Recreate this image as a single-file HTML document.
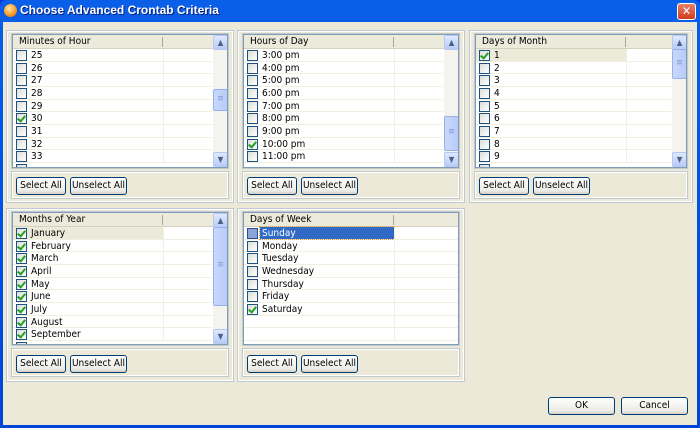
<!DOCTYPE html>
<html><head><meta charset="utf-8"><style>
*{box-sizing:border-box;margin:0;padding:0}
body{width:700px;height:428px;overflow:hidden;background:#0831d9;font-family:"DejaVu Sans Condensed","Liberation Sans",sans-serif;font-size:10px;position:relative;white-space:nowrap}
.win{position:absolute;left:0;top:0;width:700px;height:428px;background:linear-gradient(#0a5fe8,#0054e3 40%,#0046d6);border-radius:6px 6px 0 0}
.title{position:absolute;left:20px;top:3px;color:#fff;font-weight:bold;font-size:12px;font-family:"Liberation Sans",sans-serif;text-shadow:1px 1px #0a1e7a}
.ico{position:absolute;left:4px;top:4px;width:13px;height:13px;border-radius:50%;background:radial-gradient(circle at 40% 35%,#ffe7a0,#f08a10 70%,#b04a00)}
.close{position:absolute;left:677px;top:3px;width:19px;height:17px;border:1px solid #fff;border-radius:3px;background:linear-gradient(#e8806a,#d33a1c);color:#fff;font-weight:bold;font-size:12px;text-align:center;line-height:15px}
.client{position:absolute;left:3px;top:22px;width:694px;height:403px;background:#ece9d8}
.grp{position:absolute;border:1px solid #c0c8d0;box-shadow:inset 0 0 0 1px #fff}
.list{position:absolute;border:1px solid #7f9db9;background:#fff;overflow:hidden}
.hdr{position:absolute;left:0;top:0;right:0;height:14px;background:#ebeadb;border-bottom:1px solid #d6d2c2;padding-left:6px;line-height:14px;color:#000}
.hdr .sep{position:absolute;top:2px;width:1px;height:10px;background:#aca899}
.row{position:absolute;left:0;height:12.65px;border-bottom:1px solid #f1efe2;line-height:14px}
.row .cb{position:absolute;left:3px;top:1px;width:11px;height:11px;border:1px solid #1c5180;background:linear-gradient(135deg,#dcdcd7,#fff)}
.row .cb.on::after{content:"";position:absolute;left:2px;top:0px;width:3px;height:6px;border:solid #21a121;border-width:0 2px 2px 0;transform:rotate(40deg)}
.row .t{position:absolute;left:18px;top:0}
.row .col{position:absolute;top:0;width:1px;height:13px;background:#f1efe2}
.sb{position:absolute;width:15px;background:#f4f3ee}
.arr{position:absolute;left:0;width:15px;height:15px;border:1px solid #b8c8f0;border-radius:2px;background:linear-gradient(#e0e8fe,#b8ccf8);color:#4d6185;font-size:8px;text-align:center;line-height:13px}
.thumb{position:absolute;left:0;width:15px;border:1px solid #98b0e8;border-radius:2px;background:linear-gradient(90deg,#cad8fb,#b8cbf8);color:#7f9ad8;text-align:center;font-size:9px}
.btn{position:absolute;height:18px;border:1px solid #003c74;border-radius:3px;background:linear-gradient(#fff,#ecebe6 80%,#d6d0c5);text-align:center;line-height:16px;color:#000}
</style></head><body>
<div class="win">
<div class="ico"></div><div class="title">Choose Advanced Crontab Criteria</div>
<div class="close">✕</div>
<div class="client"></div>
</div>

<!-- Panel 1 -->
<div class="grp" style="left:6px;top:30px;width:228px;height:173px"></div>
<div class="grp" style="left:11px;top:33px;width:218px;height:136px"></div>
<div class="list" style="left:12px;top:34px;width:216px;height:134px">
<div class="hdr">Minutes of Hour<div class="sep" style="left:149px"></div></div>
<div style="position:absolute;left:0;top:14px;width:199px">
<div class="row" style="top:0;width:199px"><span class="cb"></span><span class="t">25</span><span class="col" style="left:150px"></span></div>
<div class="row" style="top:12.65px;width:199px"><span class="cb"></span><span class="t">26</span><span class="col" style="left:150px"></span></div>
<div class="row" style="top:25.3px;width:199px"><span class="cb"></span><span class="t">27</span><span class="col" style="left:150px"></span></div>
<div class="row" style="top:37.95px;width:199px"><span class="cb"></span><span class="t">28</span><span class="col" style="left:150px"></span></div>
<div class="row" style="top:50.6px;width:199px"><span class="cb"></span><span class="t">29</span><span class="col" style="left:150px"></span></div>
<div class="row" style="top:63.25px;width:199px"><span class="cb on"></span><span class="t">30</span><span class="col" style="left:150px"></span></div>
<div class="row" style="top:75.9px;width:199px"><span class="cb"></span><span class="t">31</span><span class="col" style="left:150px"></span></div>
<div class="row" style="top:88.55px;width:199px"><span class="cb"></span><span class="t">32</span><span class="col" style="left:150px"></span></div>
<div class="row" style="top:101.2px;width:199px"><span class="cb"></span><span class="t">33</span><span class="col" style="left:150px"></span></div>
<div class="row" style="top:113.85px;width:199px"><span class="cb"></span></div>
</div>
<div class="sb" style="left:200px;top:0;height:132px"><div class="arr" style="top:0">▲</div><div class="thumb" style="top:54px;height:22px;line-height:18px">≡</div><div class="arr" style="top:117px">▼</div></div>
</div>
<div class="grp" style="left:11px;top:171px;width:218px;height:28px"></div>
<div class="btn" style="left:16px;top:177px;width:50px">Select All</div>
<div class="btn" style="left:70px;top:177px;width:57px">Unselect All</div>

<!-- Panel 2 -->
<div class="grp" style="left:237px;top:30px;width:228px;height:173px"></div>
<div class="grp" style="left:242px;top:33px;width:218px;height:136px"></div>
<div class="list" style="left:243px;top:34px;width:216px;height:134px">
<div class="hdr">Hours of Day<div class="sep" style="left:149px"></div></div>
<div style="position:absolute;left:0;top:14px;width:199px">
<div class="row" style="top:0;width:199px"><span class="cb"></span><span class="t">3:00 pm</span><span class="col" style="left:150px"></span></div>
<div class="row" style="top:12.65px;width:199px"><span class="cb"></span><span class="t">4:00 pm</span><span class="col" style="left:150px"></span></div>
<div class="row" style="top:25.3px;width:199px"><span class="cb"></span><span class="t">5:00 pm</span><span class="col" style="left:150px"></span></div>
<div class="row" style="top:37.95px;width:199px"><span class="cb"></span><span class="t">6:00 pm</span><span class="col" style="left:150px"></span></div>
<div class="row" style="top:50.6px;width:199px"><span class="cb"></span><span class="t">7:00 pm</span><span class="col" style="left:150px"></span></div>
<div class="row" style="top:63.25px;width:199px"><span class="cb"></span><span class="t">8:00 pm</span><span class="col" style="left:150px"></span></div>
<div class="row" style="top:75.9px;width:199px"><span class="cb"></span><span class="t">9:00 pm</span><span class="col" style="left:150px"></span></div>
<div class="row" style="top:88.55px;width:199px"><span class="cb on"></span><span class="t">10:00 pm</span><span class="col" style="left:150px"></span></div>
<div class="row" style="top:101.2px;width:199px"><span class="cb"></span><span class="t">11:00 pm</span><span class="col" style="left:150px"></span></div>
</div>
<div class="sb" style="left:200px;top:0;height:132px"><div class="arr" style="top:0">▲</div><div class="thumb" style="top:81px;height:35px;line-height:31px">≡</div><div class="arr" style="top:117px">▼</div></div>
</div>
<div class="grp" style="left:242px;top:171px;width:218px;height:28px"></div>
<div class="btn" style="left:247px;top:177px;width:50px">Select All</div>
<div class="btn" style="left:301px;top:177px;width:57px">Unselect All</div>

<!-- Panel 3 -->
<div class="grp" style="left:469px;top:30px;width:224px;height:173px"></div>
<div class="grp" style="left:474px;top:33px;width:214px;height:136px"></div>
<div class="list" style="left:475px;top:34px;width:212px;height:134px">
<div class="hdr">Days of Month<div class="sep" style="left:149px"></div></div>
<div style="position:absolute;left:0;top:14px;width:195px">
<div class="row" style="top:0;width:195px;background:linear-gradient(90deg,#ecead8 150px,#fff 150px)"><span class="cb on"></span><span class="t">1</span><span class="col" style="left:150px"></span></div>
<div class="row" style="top:12.65px;width:195px"><span class="cb"></span><span class="t">2</span><span class="col" style="left:150px"></span></div>
<div class="row" style="top:25.3px;width:195px"><span class="cb"></span><span class="t">3</span><span class="col" style="left:150px"></span></div>
<div class="row" style="top:37.95px;width:195px"><span class="cb"></span><span class="t">4</span><span class="col" style="left:150px"></span></div>
<div class="row" style="top:50.6px;width:195px"><span class="cb"></span><span class="t">5</span><span class="col" style="left:150px"></span></div>
<div class="row" style="top:63.25px;width:195px"><span class="cb"></span><span class="t">6</span><span class="col" style="left:150px"></span></div>
<div class="row" style="top:75.9px;width:195px"><span class="cb"></span><span class="t">7</span><span class="col" style="left:150px"></span></div>
<div class="row" style="top:88.55px;width:195px"><span class="cb"></span><span class="t">8</span><span class="col" style="left:150px"></span></div>
<div class="row" style="top:101.2px;width:195px"><span class="cb"></span><span class="t">9</span><span class="col" style="left:150px"></span></div>
<div class="row" style="top:113.85px;width:195px"><span class="cb"></span></div>
</div>
<div class="sb" style="left:196px;top:0;height:132px"><div class="arr" style="top:0">▲</div><div class="thumb" style="top:14px;height:30px;line-height:26px">≡</div><div class="arr" style="top:117px">▼</div></div>
</div>
<div class="grp" style="left:474px;top:171px;width:214px;height:28px"></div>
<div class="btn" style="left:479px;top:177px;width:50px">Select All</div>
<div class="btn" style="left:533px;top:177px;width:57px">Unselect All</div>

<!-- Panel 4 -->
<div class="grp" style="left:6px;top:208px;width:228px;height:174px"></div>
<div class="grp" style="left:11px;top:211px;width:218px;height:135px"></div>
<div class="list" style="left:12px;top:212px;width:216px;height:133px">
<div class="hdr">Months of Year<div class="sep" style="left:149px"></div></div>
<div style="position:absolute;left:0;top:14px;width:199px">
<div class="row" style="top:0;width:199px;background:linear-gradient(90deg,#ecead8 150px,#fff 150px)"><span class="cb on"></span><span class="t">January</span><span class="col" style="left:150px"></span></div>
<div class="row" style="top:12.65px;width:199px"><span class="cb on"></span><span class="t">February</span><span class="col" style="left:150px"></span></div>
<div class="row" style="top:25.3px;width:199px"><span class="cb on"></span><span class="t">March</span><span class="col" style="left:150px"></span></div>
<div class="row" style="top:37.95px;width:199px"><span class="cb on"></span><span class="t">April</span><span class="col" style="left:150px"></span></div>
<div class="row" style="top:50.6px;width:199px"><span class="cb on"></span><span class="t">May</span><span class="col" style="left:150px"></span></div>
<div class="row" style="top:63.25px;width:199px"><span class="cb on"></span><span class="t">June</span><span class="col" style="left:150px"></span></div>
<div class="row" style="top:75.9px;width:199px"><span class="cb on"></span><span class="t">July</span><span class="col" style="left:150px"></span></div>
<div class="row" style="top:88.55px;width:199px"><span class="cb on"></span><span class="t">August</span><span class="col" style="left:150px"></span></div>
<div class="row" style="top:101.2px;width:199px"><span class="cb on"></span><span class="t">September</span><span class="col" style="left:150px"></span></div>
<div class="row" style="top:113.85px;width:199px"><span class="cb on"></span></div>
</div>
<div class="sb" style="left:200px;top:0;height:131px"><div class="arr" style="top:0">▲</div><div class="thumb" style="top:14px;height:79px;line-height:75px">≡</div><div class="arr" style="top:116px">▼</div></div>
</div>
<div class="grp" style="left:11px;top:348px;width:218px;height:29px"></div>
<div class="btn" style="left:16px;top:355px;width:50px">Select All</div>
<div class="btn" style="left:70px;top:355px;width:57px">Unselect All</div>

<!-- Panel 5 -->
<div class="grp" style="left:237px;top:208px;width:228px;height:174px"></div>
<div class="grp" style="left:242px;top:211px;width:218px;height:135px"></div>
<div class="list" style="left:243px;top:212px;width:216px;height:133px">
<div class="hdr">Days of Week<div class="sep" style="left:149px"></div></div>
<div style="position:absolute;left:0;top:14px;width:214px">
<div class="row" style="top:0;width:214px"><span class="cb" style="background:#8aa4d8;border-color:#2c4e90"></span><span style="position:absolute;left:16px;top:0;width:134px;height:12px;line-height:13px;background:#316ac5;color:#fff;padding-left:2px;outline:1px dotted #e0a040">Sunday</span><span class="col" style="left:150px"></span></div>
<div class="row" style="top:12.65px;width:214px"><span class="cb"></span><span class="t">Monday</span><span class="col" style="left:150px"></span></div>
<div class="row" style="top:25.3px;width:214px"><span class="cb"></span><span class="t">Tuesday</span><span class="col" style="left:150px"></span></div>
<div class="row" style="top:37.95px;width:214px"><span class="cb"></span><span class="t">Wednesday</span><span class="col" style="left:150px"></span></div>
<div class="row" style="top:50.6px;width:214px"><span class="cb"></span><span class="t">Thursday</span><span class="col" style="left:150px"></span></div>
<div class="row" style="top:63.25px;width:214px"><span class="cb"></span><span class="t">Friday</span><span class="col" style="left:150px"></span></div>
<div class="row" style="top:75.9px;width:214px"><span class="cb on"></span><span class="t">Saturday</span><span class="col" style="left:150px"></span></div>
<div class="row" style="top:88.55px;width:214px"><span class="col" style="left:150px"></span></div>
<div class="row" style="top:101.2px;width:214px"><span class="col" style="left:150px"></span></div>
</div>
</div>
<div class="grp" style="left:242px;top:348px;width:218px;height:29px"></div>
<div class="btn" style="left:247px;top:355px;width:50px">Select All</div>
<div class="btn" style="left:301px;top:355px;width:57px">Unselect All</div>

<div class="btn" style="left:548px;top:397px;width:67px;height:18px">OK</div>
<div class="btn" style="left:621px;top:397px;width:67px;height:18px">Cancel</div>
</body></html>
